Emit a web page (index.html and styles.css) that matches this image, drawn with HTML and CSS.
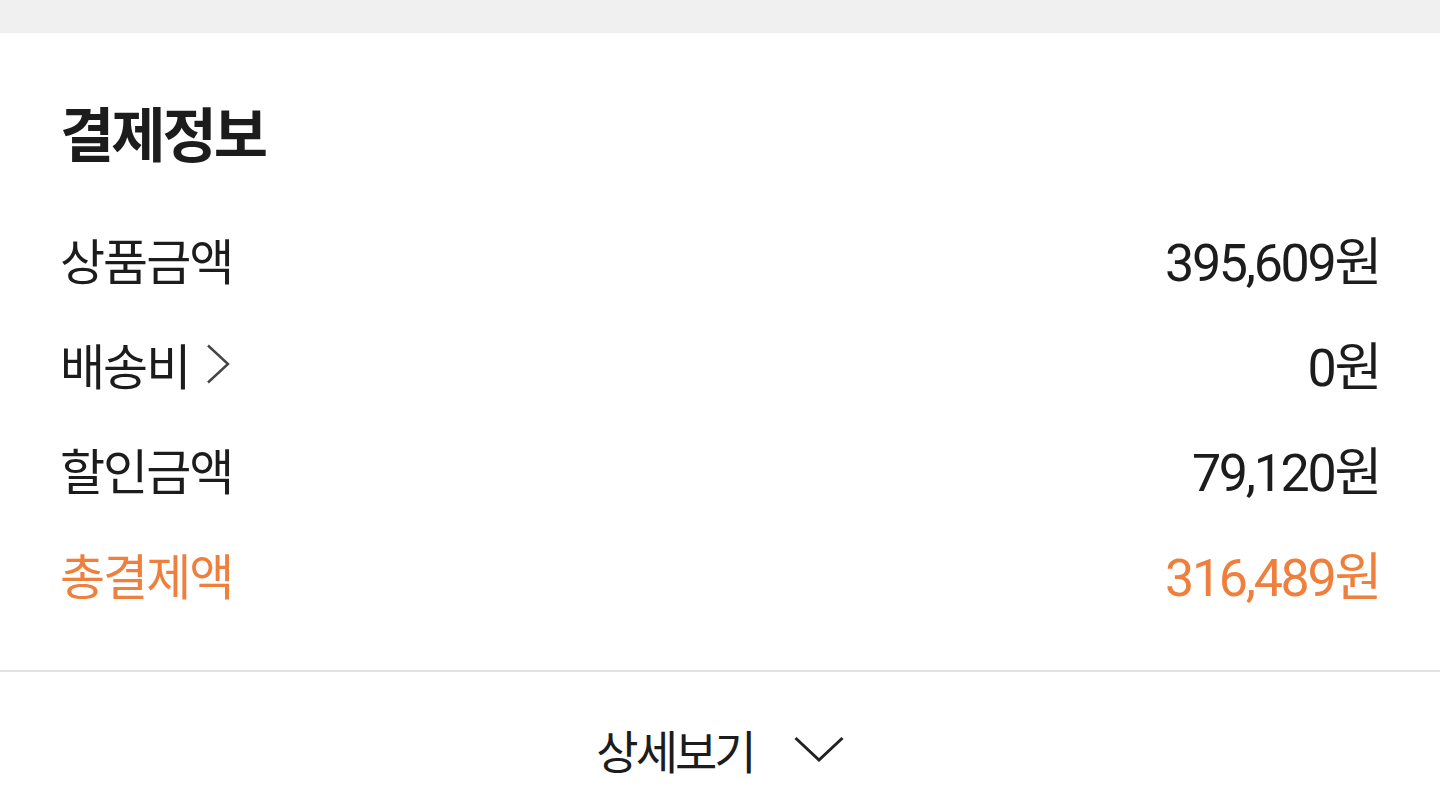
FILE: index.html
```html
<!DOCTYPE html>
<html lang="ko">
<head>
    <meta charset="UTF-8">
    <meta name="viewport" content="width=device-width, initial-scale=1.0">
    <title>결제정보</title>
    <link rel="stylesheet" href="styles.css">
</head>
<body>
    <div class="topbar"></div>

    <div class="payment">
        <h1>결제정보</h1>

        <div class="row">
            <span class="label">상품금액</span>
            <span class="amount">395,609원</span>
        </div>
        <div class="row">
            <span class="label">배송비
                <svg class="arrow-right" width="26" height="40" viewBox="0 0 26 40">
                    <path d="M3 1.5 L23 20 L3 38.5" fill="none" stroke="#444" stroke-width="2.4"/>
                </svg>
            </span>
            <span class="amount">0원</span>
        </div>
        <div class="row">
            <span class="label">할인금액</span>
            <span class="amount">79,120원</span>
        </div>
        <div class="row total">
            <span class="label">총결제액</span>
            <span class="amount">316,489원</span>
        </div>
    </div>

    <div class="detail-toggle">
        <span class="toggle-text">상세보기</span>
        <svg class="arrow-down" width="50" height="28" viewBox="0 0 50 28">
            <path d="M1.5 3 L25 25 L48.5 3" fill="none" stroke="#222" stroke-width="3"/>
        </svg>
    </div>
</body>
</html>
```

FILE: styles.css
```css
body {
    margin: 0;
    background-color: white;
    font-family: Roboto, 'Noto Sans CJK KR', sans-serif;
    color: #1c1c1c;
}

.topbar {
    height: 33px;
    background-color: #f0f0f0;
}

.payment {
    padding: 65px 62px 44px 60px;
    border-bottom: 2px solid #e2e2e2;
}

h1 {
    margin: 0 0 40px 0;
    font-family: 'Noto Sans CJK KR', sans-serif;
    font-size: 59px;
    font-weight: 700;
    line-height: 68px;
    letter-spacing: -3px;
}

.row {
    display: flex;
    justify-content: space-between;
    align-items: center;
    height: 105px;
}

.label {
    display: flex;
    align-items: center;
    gap: 16px;
    font-family: 'Noto Sans CJK KR', sans-serif;
    font-size: 49px;
    letter-spacing: -2px;
}

.amount {
    font-size: 52px;
    letter-spacing: -2.3px;
    margin-right: -2px;
}

.total {
    color: #ef7f3c;
}

.detail-toggle {
    display: flex;
    justify-content: center;
    align-items: center;
    gap: 40px;
    height: 154px;
    font-family: 'Noto Sans CJK KR', sans-serif;
    font-size: 46px;
    letter-spacing: -3px;
    color: #1c1c1c;
}
```
